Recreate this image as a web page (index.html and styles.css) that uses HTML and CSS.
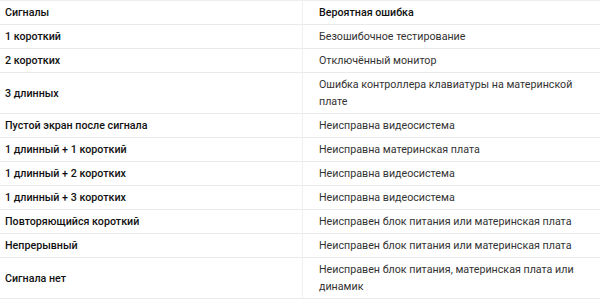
FILE: index.html
```html
<!DOCTYPE html>
<html lang="ru">
<head>
<meta charset="utf-8">
<link rel="stylesheet" href="styles.css">
</head>
<body>
<table class="beeps">
  <tr class="head"><td>Сигналы</td><td>Вероятная ошибка</td></tr>
  <tr><td>1 короткий</td><td>Безошибочное тестирование</td></tr>
  <tr><td>2 коротких</td><td>Отключённый монитор</td></tr>
  <tr><td>3 длинных</td><td>Ошибка контроллера клавиатуры на материнской плате</td></tr>
  <tr><td>Пустой экран после сигнала</td><td>Неисправна видеосистема</td></tr>
  <tr><td>1 длинный + 1 короткий</td><td>Неисправна материнская плата</td></tr>
  <tr><td>1 длинный + 2 коротких</td><td>Неисправна видеосистема</td></tr>
  <tr><td>1 длинный + 3 коротких</td><td>Неисправна видеосистема</td></tr>
  <tr><td>Повторяющийся короткий</td><td>Неисправен блок питания или материнская плата</td></tr>
  <tr><td>Непрерывный</td><td>Неисправен блок питания или материнская плата</td></tr>
  <tr><td>Сигнала нет</td><td>Неисправен блок питания, материнская плата или динамик</td></tr>
</table>
</body>
</html>
```
FILE: styles.css
```css
html, body {
  margin: 0;
  padding: 0;
  background: #fff;
}
.beeps {
  border-collapse: collapse;
  width: 600px;
  font-family: Roboto, "Noto Sans", sans-serif;
  font-size: 10.7px;
  line-height: 17px;
  color: #333;
  border-top: 1px solid #eeeeee;
}
.beeps td {
  padding: 3px 15px 3px 16px;
  border-bottom: 1px solid #eaeaea;
  vertical-align: middle;
}
.beeps td:first-child {
  width: 282px;
  padding-left: 5px;
  border-right: 1px solid #efefef;
  font-weight: 500;
  color: #111;
}
.beeps .head td:last-child {
  font-weight: 500;
  color: #111;
}
```
